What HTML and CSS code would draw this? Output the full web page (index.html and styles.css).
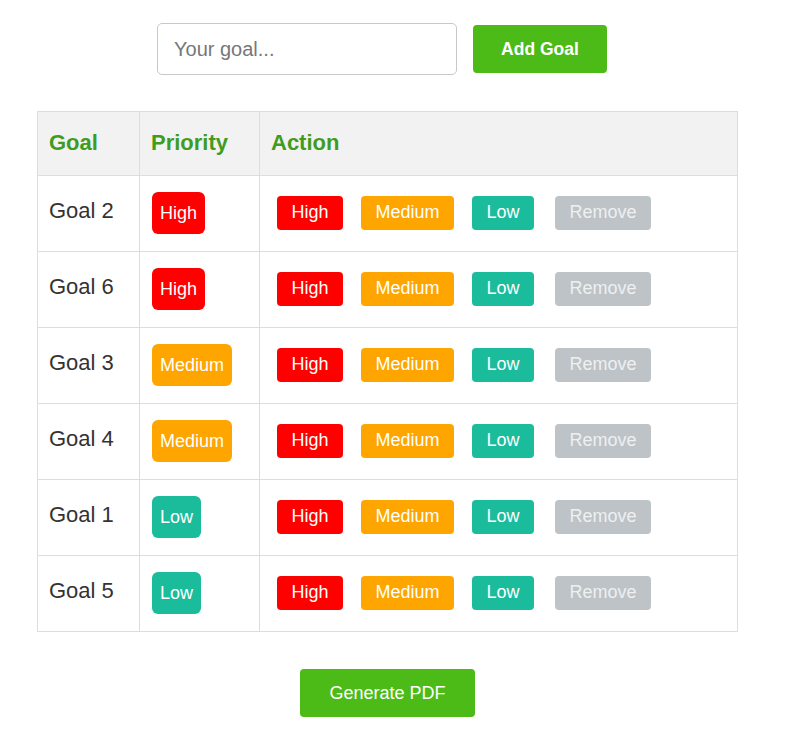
FILE: index.html
```html
<!DOCTYPE html>
<html>
<head>
<meta charset="utf-8">
<link rel="stylesheet" href="styles.css">
</head>
<body>
<div class="page">
  <div class="add-form">
    <input class="goal-input" type="text" placeholder="Your goal...">
    <button class="btn btn-green add-btn">Add Goal</button>
  </div>
  <table class="goals">
    <thead>
      <tr><th class="c-goal">Goal</th><th class="c-prio">Priority</th><th>Action</th></tr>
    </thead>
    <tbody>
      <tr><td>Goal 2</td><td><span class="badge red">High</span></td><td><div class="actions"><button class="act red">High</button><button class="act orange">Medium</button><button class="act teal">Low</button><button class="act gray remove">Remove</button></div></td></tr>
      <tr><td>Goal 6</td><td><span class="badge red">High</span></td><td><div class="actions"><button class="act red">High</button><button class="act orange">Medium</button><button class="act teal">Low</button><button class="act gray remove">Remove</button></div></td></tr>
      <tr><td>Goal 3</td><td><span class="badge orange">Medium</span></td><td><div class="actions"><button class="act red">High</button><button class="act orange">Medium</button><button class="act teal">Low</button><button class="act gray remove">Remove</button></div></td></tr>
      <tr><td>Goal 4</td><td><span class="badge orange">Medium</span></td><td><div class="actions"><button class="act red">High</button><button class="act orange">Medium</button><button class="act teal">Low</button><button class="act gray remove">Remove</button></div></td></tr>
      <tr><td>Goal 1</td><td><span class="badge teal">Low</span></td><td><div class="actions"><button class="act red">High</button><button class="act orange">Medium</button><button class="act teal">Low</button><button class="act gray remove">Remove</button></div></td></tr>
      <tr><td>Goal 5</td><td><span class="badge teal">Low</span></td><td><div class="actions"><button class="act red">High</button><button class="act orange">Medium</button><button class="act teal">Low</button><button class="act gray remove">Remove</button></div></td></tr>
    </tbody>
  </table>
  <div class="footer">
    <button class="btn btn-green pdf-btn">Generate PDF</button>
  </div>
</div>
</body>
</html>
```
FILE: styles.css
```css
* { box-sizing: border-box; }
body {
  margin: 0;
  background: #fff;
  font-family: "Liberation Sans", Arial, sans-serif;
  color: #333;
}
.page {
  width: 701px;
  margin-left: 37px;
  padding-top: 23px;
}
.add-form {
  display: flex;
  align-items: center;
  justify-content: center;
  gap: 16px;
  padding-right: 11px;
}
.goal-input {
  width: 300px;
  height: 52px;
  border: 1px solid #c8c8c8;
  border-radius: 5px;
  padding: 0 16px;
  font-family: inherit;
  font-size: 20px;
  color: #333;
  outline: none;
}
.goal-input::placeholder { color: #777; }
.btn {
  border: none;
  border-radius: 4px;
  color: #fff;
  font-family: inherit;
  cursor: pointer;
}
.btn-green { background: #4cbb17; }
.add-btn {
  width: 134px;
  height: 48px;
  font-size: 17.5px;
  font-weight: bold;
}
.goals {
  margin-top: 36px;
  width: 701px;
  border-collapse: collapse;
  border: 1px solid #ddd;
}
.goals th, .goals td {
  border: 1px solid #ddd;
  padding: 0 11px;
  text-align: left;
  vertical-align: middle;
}
.goals th {
  background: #f2f2f2;
  color: #3f9c1e;
  font-size: 22px;
  font-weight: bold;
  height: 64px;
  padding-bottom: 2px;
}
.goals td {
  height: 76px;
  font-size: 22px;
  color: #333;
  padding-bottom: 2px;
}
.goals td:first-child { padding-bottom: 5px; }
.c-goal { width: 102px; }
.c-prio { width: 120px; }
.badge {
  display: inline-block;
  height: 42px;
  line-height: 42px;
  padding: 0 8px;
  margin-left: 1px;
  border-radius: 6px;
  color: #fff;
  font-size: 18px;
  vertical-align: middle;
}
.actions {
  display: flex;
  gap: 18px;
  padding-left: 6px;
}
.act {
  height: 34px;
  padding: 0 14.5px;
  border: none;
  border-radius: 4px;
  color: #fff;
  font-family: inherit;
  font-size: 18px;
  cursor: pointer;
}
.remove { margin-left: 3px; color: #eef0f1; }
.red { background: #ff0000; }
.orange { background: #ffa500; }
.teal { background: #1abc9c; }
.gray { background: #bdc3c7; }
.footer {
  display: flex;
  justify-content: center;
  margin-top: 37px;
}
.pdf-btn {
  width: 175px;
  height: 48px;
  font-size: 18px;
}
```
